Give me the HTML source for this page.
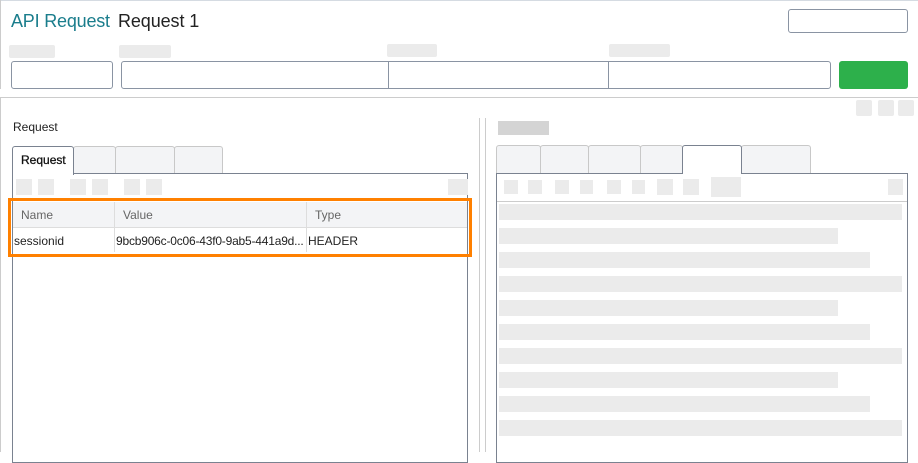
<!DOCTYPE html>
<html><head><meta charset="utf-8"><style>
*{margin:0;padding:0;box-sizing:border-box}
body{width:918px;height:452px;background:#fff;position:relative;overflow:hidden;font-family:"Liberation Sans",sans-serif}
div{position:absolute}
.ph{background:#ebebeb;border-radius:2px}
.in{border:1px solid #8a94a3;background:#fff}
.tab{background:#f3f4f6;border:1px solid #c8c8c8;border-bottom:none;border-radius:3px 3px 0 0}
.sq{background:#ebebeb}
.bar{background:#ebebeb;height:16px;left:499px}
.t{font-size:12px;color:#222;white-space:nowrap}
</style></head><body>
<div style="left:0;top:0;width:918px;height:1px;background:#d5dbe2"></div>
<div style="left:0;top:0;width:1px;height:89px;background:#ccc"></div>
<div style="left:11px;top:11px;font-size:18px;color:#1a7d8c;white-space:nowrap;letter-spacing:-0.2px">API Request</div>
<div style="left:118px;top:11px;font-size:18px;color:#222;white-space:nowrap;letter-spacing:-0.1px">Request 1</div>
<div class="in" style="left:788px;top:9px;width:120px;height:24px;border-radius:3px"></div>
<div class="ph" style="left:9px;top:45px;width:46px;height:13px"></div>
<div class="ph" style="left:119px;top:45px;width:52px;height:13px"></div>
<div class="ph" style="left:387px;top:44px;width:50px;height:13px"></div>
<div class="ph" style="left:609px;top:44px;width:61px;height:13px"></div>
<div class="in" style="left:11px;top:61px;width:102px;height:28px;border-radius:3px"></div>
<div class="in" style="left:121px;top:61px;width:268px;height:28px;border-radius:3px 0 0 3px"></div>
<div class="in" style="left:388px;top:61px;width:221px;height:28px"></div>
<div class="in" style="left:608px;top:61px;width:223px;height:28px;border-radius:0 3px 3px 0"></div>
<div style="left:839px;top:61px;width:69px;height:28px;background:#2db04b;border-radius:3px"></div>
<div style="left:0;top:97px;width:918px;height:1px;background:#ccc"></div>
<div style="left:0;top:97px;width:1px;height:355px;background:#ccc"></div>
<div class="ph" style="left:856px;top:100px;width:16px;height:16px"></div>
<div class="ph" style="left:878px;top:100px;width:16px;height:16px"></div>
<div class="ph" style="left:898px;top:100px;width:16px;height:16px"></div>
<div class="t" style="left:13px;top:120px">Request</div>
<div class="tab" style="left:73px;top:146px;width:43px;height:28px"></div>
<div class="tab" style="left:115px;top:146px;width:60px;height:28px"></div>
<div class="tab" style="left:174px;top:146px;width:49px;height:28px"></div>
<div style="left:12px;top:173px;width:456px;height:290px;border:1px solid #7a8290"></div>
<div style="left:12px;top:146px;width:62px;height:29px;background:#fff;border:1px solid #7a8290;border-bottom:none;border-radius:3px 3px 0 0"></div>
<div class="t" style="left:21px;top:153px;color:#111;-webkit-text-stroke:0.3px #111">Request</div>
<div class="sq" style="left:16px;top:179px;width:16px;height:16px"></div>
<div class="sq" style="left:38px;top:179px;width:16px;height:16px"></div>
<div class="sq" style="left:70px;top:179px;width:16px;height:16px"></div>
<div class="sq" style="left:92px;top:179px;width:16px;height:16px"></div>
<div class="sq" style="left:124px;top:179px;width:16px;height:16px"></div>
<div class="sq" style="left:146px;top:179px;width:16px;height:16px"></div>
<div class="sq" style="left:448px;top:179px;width:20px;height:16px"></div>
<div style="left:13px;top:202px;width:454px;height:26px;background:#f3f4f6;border-bottom:1px solid #ddd"></div>
<div style="left:114px;top:202px;width:1px;height:50px;background:#ddd"></div>
<div style="left:306px;top:202px;width:1px;height:50px;background:#ddd"></div>
<div class="t" style="left:21px;top:208px;color:#666">Name</div>
<div class="t" style="left:123px;top:208px;color:#666">Value</div>
<div class="t" style="left:315px;top:208px;color:#666">Type</div>
<div class="t" style="left:14px;top:234px">sessionid</div>
<div class="t" style="left:116px;top:234px;width:190px;overflow:hidden;letter-spacing:-0.2px">9bcb906c-0c06-43f0-9ab5-441a9d...</div>
<div class="t" style="left:308px;top:234px">HEADER</div>
<div style="left:8px;top:198px;width:464px;height:59px;border:3px solid #ff8000"></div>
<div style="left:479px;top:118px;width:1px;height:334px;background:#ccc"></div>
<div style="left:485px;top:118px;width:1px;height:334px;background:#ccc"></div>
<div style="left:498px;top:121px;width:51px;height:14px;background:#d4d4d4"></div>
<div class="tab" style="left:496px;top:145px;width:45px;height:29px"></div>
<div class="tab" style="left:540px;top:145px;width:49px;height:29px"></div>
<div class="tab" style="left:588px;top:145px;width:53px;height:29px"></div>
<div class="tab" style="left:640px;top:145px;width:43px;height:29px"></div>
<div class="tab" style="left:741px;top:145px;width:70px;height:29px"></div>
<div style="left:496px;top:173px;width:412px;height:290px;border:1px solid #7a8290"></div>
<div style="left:682px;top:145px;width:60px;height:29px;background:#fff;border:1px solid #7a8290;border-bottom:none;border-radius:3px 3px 0 0"></div>
<div class="sq" style="left:504px;top:180px;width:14px;height:14px"></div>
<div class="sq" style="left:528px;top:180px;width:14px;height:14px"></div>
<div class="sq" style="left:555px;top:180px;width:14px;height:14px"></div>
<div class="sq" style="left:580px;top:180px;width:13px;height:14px"></div>
<div class="sq" style="left:607px;top:180px;width:14px;height:14px"></div>
<div class="sq" style="left:632px;top:180px;width:13px;height:14px"></div>
<div class="sq" style="left:657px;top:179px;width:16px;height:16px"></div>
<div class="sq" style="left:683px;top:179px;width:16px;height:16px"></div>
<div class="sq" style="left:711px;top:177px;width:30px;height:20px"></div>
<div class="sq" style="left:888px;top:179px;width:15px;height:16px"></div>
<div style="left:497px;top:201px;width:410px;height:1px;background:#ccc"></div>
<div class="bar" style="top:204px;width:403px"></div>
<div class="bar" style="top:228px;width:339px"></div>
<div class="bar" style="top:252px;width:371px"></div>
<div class="bar" style="top:276px;width:403px"></div>
<div class="bar" style="top:300px;width:339px"></div>
<div class="bar" style="top:324px;width:371px"></div>
<div class="bar" style="top:348px;width:403px"></div>
<div class="bar" style="top:372px;width:339px"></div>
<div class="bar" style="top:396px;width:371px"></div>
<div class="bar" style="top:420px;width:403px"></div>
</body></html>
